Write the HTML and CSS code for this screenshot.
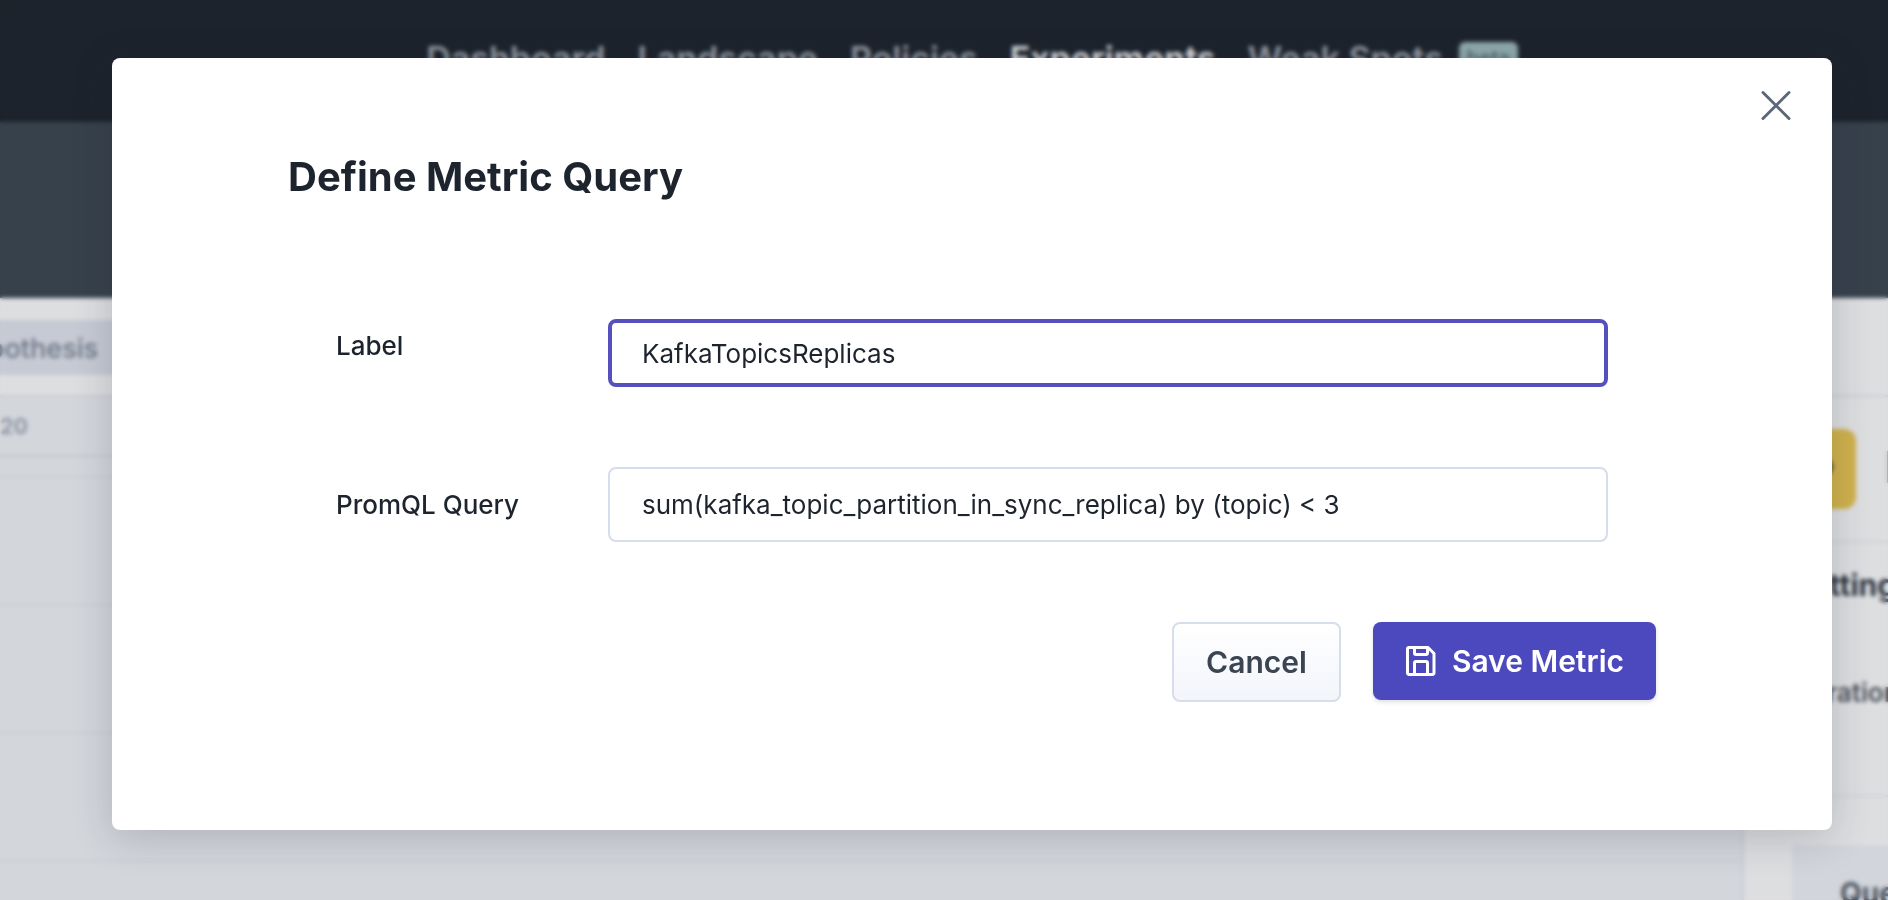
FILE: index.html
```html
<!DOCTYPE html>
<html lang="en">
<head>
<meta charset="utf-8">
<title>Define Metric Query</title>
<link rel="stylesheet" href="styles.css">
</head>
<body>
<div class="page" inert>
  <header class="topbar">
    <nav class="nav">
      <a href="#">Dashboard</a>
      <a href="#">Landscape</a>
      <a href="#">Policies</a>
      <a href="#" class="active">Experiments</a>
      <a href="#" class="with-badge">Weak Spots <span class="badge">beta</span></a>
    </nav>
  </header>
  <div class="band"></div>
  <div class="tabs"><div class="chip">Hypothesis</div></div>
  <div class="work">
    <section class="timeline">
      <div class="ruler">0:20</div>
      <div class="gap"></div>
      <div class="lane"></div>
      <div class="lane"></div>
      <div class="lane"></div>
      <div class="lane"></div>
    </section>
    <aside class="side">
      <div class="side-actions">
        <button class="run" type="button" aria-label="Run"><svg width="20" height="20" viewBox="0 0 20 20"><circle cx="10" cy="10" r="7" fill="none" stroke="currentColor" stroke-width="4"/></svg></button>
        <button class="more" type="button" aria-label="More"><svg width="32" height="32" viewBox="0 0 32 32"><path d="M2 2h28v28H2z" fill="none" stroke="currentColor" stroke-width="4"/></svg></button>
      </div>
      <div class="side-section">
        <h2>Settings</h2>
        <p>Duration</p>
      </div>
      <div class="side-card">Query</div>
    </aside>
  </div>
</div>

<div class="overlay">
  <div class="modal" role="dialog" aria-modal="true" aria-labelledby="dialog-title">
    <button class="close" type="button" aria-label="Close">
      <svg width="32" height="32" viewBox="0 0 32 32" fill="none" stroke="currentColor" stroke-width="3" stroke-linecap="round"><path d="M3 2.500l26 26M29 2.500l-26 26"/></svg>
    </button>
    <h1 id="dialog-title">Define Metric Query</h1>
    <form class="form">
      <div class="row first">
        <label for="metric-label">Label</label>
        <input id="metric-label" class="focused" type="text" value="KafkaTopicsReplicas">
      </div>
      <div class="row">
        <label for="metric-query">PromQL Query</label>
        <input id="metric-query" type="text" value="sum(kafka_topic_partition_in_sync_replica) by (topic) &lt; 3">
      </div>
    </form>
    <div class="actions">
      <button class="cancel" type="button">Cancel</button>
      <button class="save" type="button">
        <svg width="32" height="32" viewBox="0 0 32 32" fill="none" stroke="currentColor" stroke-width="3" stroke-linejoin="round"><path d="M4 2.500H23L29 8.500V28a1.500 1.500 0 0 1-1.500 1.500H4A1.500 1.500 0 0 1 2.500 28V4A1.500 1.500 0 0 1 4 2.500Z"/><path d="M9.500 3v5a1.500 1.500 0 0 0 1.500 1.500h10A1.500 1.500 0 0 0 22.500 8V3"/><path d="M9.500 29V18a1.500 1.500 0 0 1 1.500-1.500h10a1.500 1.500 0 0 1 1.500 1.500V29"/></svg>
        Save Metric
      </button>
    </div>
  </div>
</div>
</body>
</html>
```

FILE: styles.css
```css
* { box-sizing: border-box; }
body {
  margin: 0;
  height: 100vh;
  overflow: hidden;
  font-family: Inter, "Liberation Sans", sans-serif;
  color: #1d242e;
}
button, input { font: inherit; color: inherit; }

/* Page behind the dialog */
.page {
  display: flex;
  flex-direction: column;
  height: 100vh;
  overflow: hidden;
  background: #dddee0;
}
.topbar {
  flex: none;
  display: flex;
  justify-content: center;
  height: 122px;
  padding-top: 39px;
  background: #1c232c;
}
.nav { display: flex; gap: 32px; margin-left: 56px; font-size: 34px; line-height: 40px; font-weight: 600; }
.nav a { color: #949aa3; text-decoration: none; white-space: nowrap; }
.nav .active { color: #dddee0; }
.with-badge { display: flex; gap: 16px; }
.badge {
  height: 36px;
  margin-top: 3px;
  padding: 0 8px;
  border-radius: 6px;
  background: #8fa9ab;
  color: #4f6a70;
  font-size: 20px;
  line-height: 32px;
}
.band { flex: none; height: 176px; background: #37414c; }
.tabs { flex: none; height: 99px; padding: 22px 0; border-bottom: 2px solid #c8cbd1; }
.chip {
  width: 240px;
  height: 55px;
  margin-left: -48px;
  background: #c6cad4;
  color: #6f7887;
  font-size: 27px;
  line-height: 58px;
  font-weight: 500;
}
.work { flex: 1; display: flex; min-height: 0; }
.timeline { flex: 1; background: #d3d6db; border-right: 2px solid #c6cbd4; }
.ruler {
  height: 60px;
  margin-left: -20px;
  border-bottom: 2px solid #c5cacf;
  color: #8890a0;
  font-size: 21px;
  line-height: 60px;
  font-weight: 600;
}
.gap { height: 21px; border-bottom: 2px solid #cbced3; }
.lane { height: 128px; border-bottom: 2px solid #cbced3; }
.side { width: 144px; overflow: hidden; white-space: nowrap; }
.side-actions { display: flex; gap: 31px; height: 146px; padding: 32px 0 0 48px; border-bottom: 2px solid #cfd1d6; }
.side-actions button { flex: none; height: 80px; border: 0; border-radius: 12px; }
.side-actions .run { width: 64px; padding: 0 0 0 22px; text-align: left; background: #d0b14c; color: #4a4536; }
.side-actions .more { padding: 0; background: none; color: #8f96a4; }
.side-section { height: 254px; padding: 22px 0 0 48px; border-bottom: 2px solid #cfd1d6; }
.side h2 { margin: 0; font-size: 30px; line-height: 40px; font-weight: 700; color: #2c333e; }
.side p { margin: 68px 0 0; font-size: 26px; line-height: 40px; font-weight: 600; color: #4b515c; }
.side-card {
  margin: 48px 0 0 48px;
  padding: 28px 48px;
  background: #d2d5db;
  color: #4a515c;
  font-size: 28px;
  line-height: 40px;
  font-weight: 700;
}

/* Dialog */
.overlay {
  position: fixed;
  inset: 0;
  padding: 58px 56px 70px 112px;
  display: flex;
  backdrop-filter: blur(2px);
}
.modal {
  position: relative;
  flex: 1;
  padding: 95px 176px 0;
  border-radius: 8px;
  background: #fff;
  box-shadow: 0 8px 40px rgba(29, 36, 48, .2);
}
.close {
  position: absolute;
  top: 32px;
  right: 40px;
  display: flex;
  padding: 0;
  border: 0;
  background: none;
  color: #5c6879;
}
h1 { margin: 0; font-size: 40px; line-height: 48px; font-weight: 700; }
.form { padding: 118px 48px 0; display: grid; gap: 80px; }
.row { display: grid; grid-template-columns: 272px 1fr; align-items: center; }
.row.first { align-items: start; }
.row label { font-size: 26px; line-height: 32px; font-weight: 500; }
.first label { padding-top: 11px; }
.row input {
  width: 100%;
  height: 75px;
  padding: 0 32px;
  border: 2px solid #d5deea;
  border-radius: 8px;
  background: #fff;
  font-size: 26px;
  outline: 0;
}
.row input.focused { height: 68px; padding: 0 30px; border: 4px solid #5650bf; }
.actions { display: flex; justify-content: flex-end; align-items: flex-start; gap: 32px; margin-top: 80px; }
.actions button { border-radius: 8px; font-size: 30px; line-height: 36px; font-weight: 600; }
.cancel {
  padding: 20px 32px;
  border: 2px solid #d5deea;
  background: linear-gradient(#fff, #f3f5fb);
  color: #3b4552;
}
.actions .save {
  display: flex;
  gap: 15px;
  align-items: center;
  padding: 21px 32px;
  border: 0;
  background: #4c48bd;
  color: #fff;
  box-shadow: 0 2px 4px rgba(29, 36, 48, .15);
}
```
